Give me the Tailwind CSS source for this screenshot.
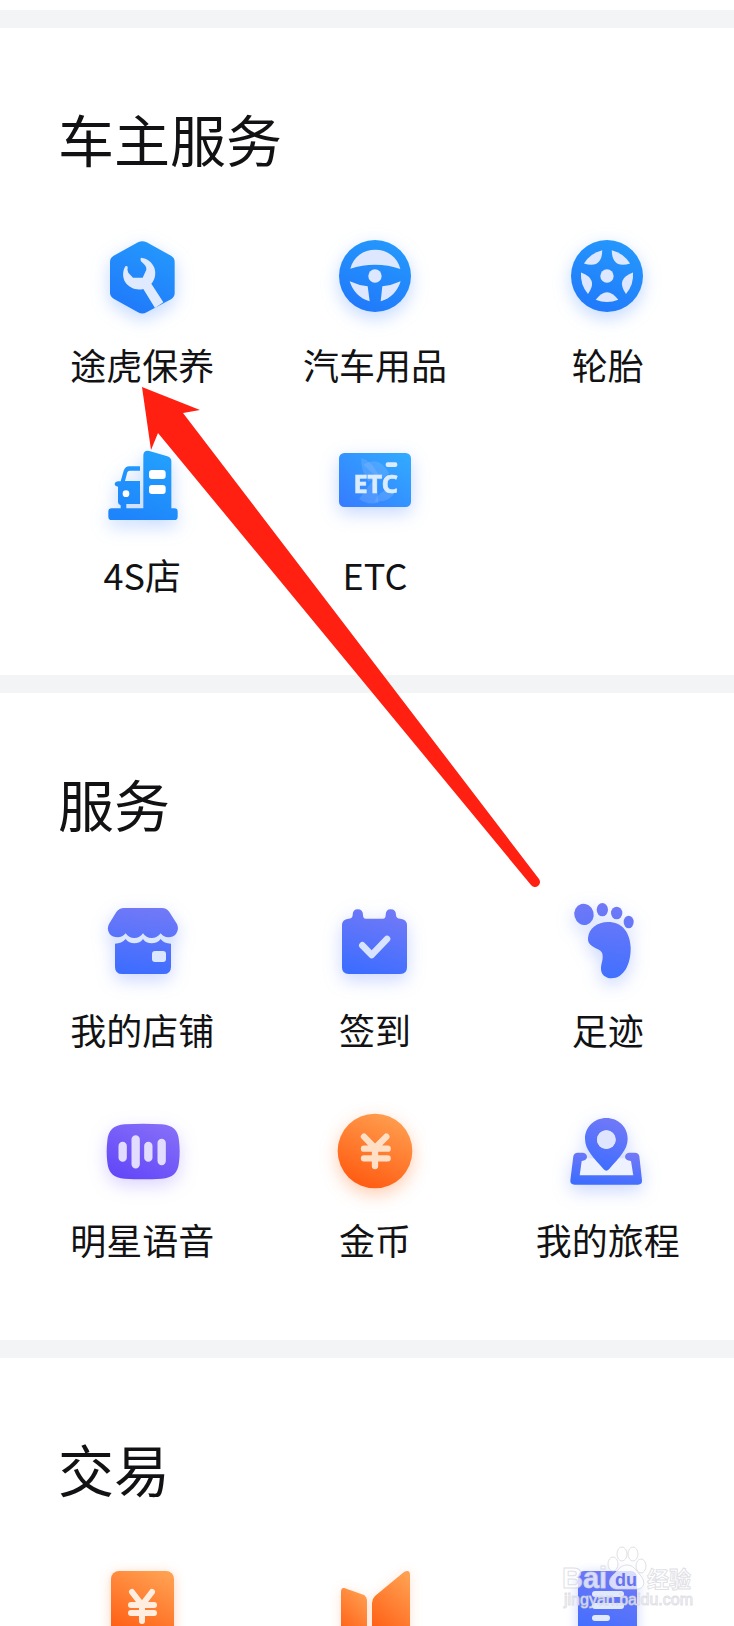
<!DOCTYPE html>
<html lang="zh-CN">
<head>
<meta charset="utf-8">
<meta name="viewport" content="width=device-width, initial-scale=1">
<title>车主服务</title>
<script src="https://cdn.jsdelivr.net/npm/@tailwindcss/browser@4"></script>
</head>
<body class="bg-white font-['Noto_Sans_CJK_SC',sans-serif] text-[#121214]">
<svg class="absolute size-0" aria-hidden="true">
  <defs>
    <linearGradient id="blue" x1="0.7" y1="0" x2="0.3" y2="1"><stop offset="0" stop-color="#2498fd"/><stop offset="1" stop-color="#2079fa"/></linearGradient>
    <linearGradient id="azure" x1="0.7" y1="0" x2="0.3" y2="1"><stop offset="0" stop-color="#22a0fd"/><stop offset="1" stop-color="#1e84fb"/></linearGradient>
    <linearGradient id="card" x1="1" y1="0" x2="0" y2="1"><stop offset="0" stop-color="#31acff"/><stop offset="1" stop-color="#367bff"/></linearGradient>
    <linearGradient id="indigo" x1="0.65" y1="0" x2="0.35" y2="1"><stop offset="0" stop-color="#7179f7"/><stop offset="1" stop-color="#3d6dff"/></linearGradient>
    <linearGradient id="indigoPage" gradientUnits="userSpaceOnUse" x1="270" y1="54" x2="240" y2="252"><stop offset="0" stop-color="#7179f7"/><stop offset="1" stop-color="#3d6dff"/></linearGradient>
    <linearGradient id="footFill" gradientUnits="userSpaceOnUse" x1="330" y1="130" x2="300" y2="355"><stop offset="0" stop-color="#7179f7"/><stop offset="1" stop-color="#4070ff"/></linearGradient>
    <linearGradient id="violet" x1="0.8" y1="0" x2="0.2" y2="1"><stop offset="0" stop-color="#866ef8"/><stop offset="1" stop-color="#6247f8"/></linearGradient>
    <linearGradient id="orange" x1="0.75" y1="0" x2="0.3" y2="1"><stop offset="0" stop-color="#ff9f50"/><stop offset="1" stop-color="#ff5a10"/></linearGradient>
  </defs>
</svg>

<main class="relative flex h-screen flex-col overflow-hidden pt-[10px]">
  <section class="shrink-0 border-t-18 border-[#f3f4f6] pt-[78px] pb-[79px]">
    <h2 class="px-[58px] text-[56px] leading-[64px]">车主服务</h2>
    <div class="mt-[58px] grid grid-cols-3 gap-y-[52px] pr-[10px] pl-[26px] text-[36px] leading-[44px]">
      <a href="#" class="flex flex-col items-center gap-[18px]">
        <svg class="size-24 overflow-visible drop-shadow-[0_6px_9px_rgba(40,120,255,0.28)]" viewBox="102 24 288 288" aria-hidden="true">
          <path fill="url(#blue)" d="M234 67Q247 60 260 67L333 107Q344 113 344 126V220Q344 231 333 238L260 277Q247 284 234 277L161 236Q150 229 150 218V126Q150 113 161 107Z"/>
          <path fill="#dfeaff" d="M197 138C187 152 187 172 196 187C208 205 230 212 250 207L285 264L310 247L274 191C285 179 289 160 283 143C276 126 262 115 243 113C241 117 241 122 246 127C256 135 260 142 259 149L248 173H219L205 158Q201 151 203 141Q202 137 197 138Z"/>
        </svg>
        <span>途虎保养</span>
      </a>
      <a href="#" class="flex flex-col items-center gap-[18px]">
        <svg class="size-24 overflow-visible drop-shadow-[0_6px_9px_rgba(40,120,255,0.28)]" viewBox="111 24 288 288" aria-hidden="true">
          <circle cx="255" cy="168" r="108" fill="url(#blue)"/>
          <g fill="#dde7ff">
            <path d="M181 146C190 110 220 89 256 89C292 89 323 111 331 147C285 130 228 130 181 146Z"/>
            <path d="M179 184Q205 196 233 199L239 244Q194 231 179 184Z"/>
            <path d="M332 184Q306 196 277 199L272 244Q317 231 332 184Z"/>
            <circle cx="255" cy="168" r="20"/>
          </g>
        </svg>
        <span>汽车用品</span>
      </a>
      <a href="#" class="flex flex-col items-center gap-[18px]">
        <svg class="size-24 overflow-visible drop-shadow-[0_6px_9px_rgba(40,120,255,0.28)]" viewBox="60 24 288 288" aria-hidden="true">
          <circle cx="201" cy="168" r="108" fill="url(#blue)"/>
          <g fill="#dde7ff">
            <circle cx="201" cy="168" r="20"/>
            <path id="slot" d="M167 239Q201 194 235 239Q201 253 167 239Z"/>
            <use href="#slot" transform="rotate(72 201 168)"/>
            <use href="#slot" transform="rotate(144 201 168)"/>
            <use href="#slot" transform="rotate(216 201 168)"/>
            <use href="#slot" transform="rotate(288 201 168)"/>
          </g>
        </svg>
        <span>轮胎</span>
      </a>
      <a href="#" class="flex flex-col items-center gap-[18px]">
        <svg class="size-24 overflow-visible drop-shadow-[0_6px_9px_rgba(40,120,255,0.28)]" viewBox="102 174 288 288" aria-hidden="true">
          <path fill="#fff" d="M262 265H322V347H262ZM186 329H210V353H186Z"/>
          <path fill="url(#azure)" fill-rule="evenodd" d="M250 385V227Q250 210 268 213L322 229Q334 233 334 244V385H343Q353 385 353 395V410Q353 420 343 420H155Q145 420 145 410V395Q145 385 155 385H182V376Q174 373 174 366V320Q164 318 164 311Q165 305 174 304H182L191 272Q196 259 208 259H240V272H209Q204 272 202 277L195 303H240V372H199V385ZM276 270Q267 270 267 279V288Q267 297 276 297H308Q317 297 317 288V279Q317 270 308 270ZM276 315Q267 315 267 324V333Q267 342 276 342H308Q317 342 317 333V324Q317 315 308 315ZM198 331A10 10 0 1 0 198 351A10 10 0 1 0 198 331Z"/>
        </svg>
        <span>4S店</span>
      </a>
      <a href="#" class="flex flex-col items-center gap-[18px]">
        <svg class="size-24 overflow-visible drop-shadow-[0_6px_9px_rgba(50,110,255,0.28)]" viewBox="81 24 288 288" aria-hidden="true">
          <rect x="117" y="69" width="216" height="162" rx="16" fill="url(#card)"/>
          <g fill="#9cc4ff" fill-opacity="0.25">
            <path d="M184 84Q216 92 238 139L205 155Q181 120 184 84Z"/>
            <path d="M190 104Q240 75 267 130L240 150Z"/>
            <path d="M177 207Q198 180 216 154Q235 170 235 218Q203 226 177 207Z"/>
            <path d="M224 215Q241 170 286 184Q270 219 224 215Z"/>
          </g>
          <rect x="257" y="97" width="35" height="14" rx="6" fill="#dcecff"/>
          <text x="227" y="189" text-anchor="middle" font-family="Noto Sans, sans-serif" font-weight="700" font-size="76" fill="#dcecff" stroke="#dcecff" stroke-width="2">ETC</text>
        </svg>
        <span>ETC</span>
      </a>
    </div>
  </section>

  <section class="shrink-0 border-t-18 border-[#f3f4f6] pt-[78px] pb-[79px]">
    <h2 class="px-[58px] text-[56px] leading-[64px]">服务</h2>
    <div class="mt-[58px] grid grid-cols-3 gap-y-[52px] pr-[10px] pl-[26px] text-[36px] leading-[44px]">
      <a href="#" class="flex flex-col items-center gap-[18px]">
        <svg class="size-24 overflow-visible drop-shadow-[0_6px_9px_rgba(70,110,255,0.28)]" viewBox="102 9 288 288" aria-hidden="true">
          <rect x="165" y="125" width="168" height="60" fill="#dbe7ff"/>
          <g fill="url(#indigoPage)">
            <path d="M192 54H306Q320 54 328 66L351 102Q358 118 348 132Q339 142 325 142Q311 142 302 130Q292 144 275 144Q258 144 249 130Q240 144 223 144Q206 144 197 130Q187 142 173 142Q158 142 149 132Q139 118 147 102L169 66Q178 54 192 54Z"/>
            <path d="M165 161Q185 161 197 147Q207 160 223 160Q240 160 249 147Q258 160 275 160Q292 160 302 147Q312 161 333 161V230Q333 252 311 252H187Q165 252 165 230Z"/>
          </g>
          <rect x="276" y="183" width="42" height="33" rx="9" fill="#dbe7ff"/>
        </svg>
        <span>我的店铺</span>
      </a>
      <a href="#" class="flex flex-col items-center gap-[18px]">
        <svg class="size-24 overflow-visible drop-shadow-[0_6px_9px_rgba(70,110,255,0.28)]" viewBox="801 9 288 288" aria-hidden="true">
          <path fill="url(#indigo)" d="M865 86Q878 86 878 75Q878 58 893 58Q909 58 909 75Q909 86 917 86H969Q977 86 977 75Q977 58 992 58Q1008 58 1008 75Q1008 86 1021 86Q1041 88 1041 106V232Q1041 252 1021 252H866Q846 252 846 232V106Q846 88 865 86Z"/>
          <path d="M907 166L935 195L981 147" fill="none" stroke="#d8e3ff" stroke-width="20" stroke-linecap="round" stroke-linejoin="round"/>
        </svg>
        <span>签到</span>
      </a>
      <a href="#" class="flex flex-col items-center gap-[18px]">
        <svg class="size-24 overflow-visible drop-shadow-[0_6px_9px_rgba(70,110,255,0.28)]" viewBox="180 99 288 288" aria-hidden="true">
          <g fill="url(#footFill)">
            <ellipse cx="252" cy="163" rx="29" ry="32" transform="rotate(-15 252 163)"/>
            <ellipse cx="307" cy="149" rx="17" ry="20"/>
            <ellipse cx="350" cy="159" rx="17" ry="19"/>
            <ellipse cx="386" cy="186" rx="15" ry="19"/>
            <path d="M264 235C266 205 292 186 324 186C366 186 390 216 392 262C393 315 370 355 335 355C314 354 303 342 303 326C303 310 309 302 308 287C307 269 290 268 277 259C267 252 263 245 264 235Z"/>
          </g>
        </svg>
        <span>足迹</span>
      </a>
      <a href="#" class="flex flex-col items-center gap-[18px]">
        <svg class="size-24 overflow-visible drop-shadow-[0_6px_9px_rgba(110,80,255,0.25)]" viewBox="102 39 288 288" aria-hidden="true">
          <path fill="url(#violet)" d="M194 103Q249 99 305 103C338 105 355 121 357 152Q361 184 357 217C354 249 338 264 305 266Q249 270 194 266C161 264 145 249 142 217Q138 184 142 152C145 121 161 105 194 103Z"/>
          <g stroke="#e2dcff" stroke-width="25" stroke-linecap="round">
            <path d="M188 168V203M227 148V223M265 168V203M305 159V213"/>
          </g>
        </svg>
        <span>明星语音</span>
      </a>
      <a href="#" class="flex flex-col items-center gap-[18px]">
        <svg class="size-24 overflow-visible drop-shadow-[0_6px_9px_rgba(255,110,30,0.35)]" viewBox="111 39 288 288" aria-hidden="true">
          <circle cx="255" cy="183" r="112" fill="url(#orange)"/>
          <path d="M222 140L255 174L289 140M222 176H293M222 205H293M255 174V228" fill="none" stroke="#ffe0c6" stroke-width="19" stroke-linecap="round" stroke-linejoin="round"/>
        </svg>
        <span>金币</span>
      </a>
      <a href="#" class="flex flex-col items-center gap-[18px]">
        <svg class="size-24 overflow-visible drop-shadow-[0_6px_9px_rgba(70,110,255,0.28)]" viewBox="120 39 288 288" aria-hidden="true">
          <path fill="#eef2ff" d="M185 205H333L338 260H180Z"/>
          <path fill="url(#indigo)" d="M173 188H189Q201 190 201 201Q200 212 185 213L179 256H340L333 213Q316 211 315 201Q315 190 327 188H345Q356 188 358 199L366 271Q367 284 354 284H164Q150 284 151 271L160 199Q162 188 173 188Z"/>
          <path fill="url(#indigo)" fill-rule="evenodd" d="M259 84C295 84 323 111 323 146C323 180 297 202 267 238Q259 246 251 238C221 202 195 180 195 146C195 111 223 84 259 84ZM259 121A28 28 0 1 0 259 177A28 28 0 1 0 259 121Z"/>
          <circle cx="259" cy="149" r="28" fill="#dfe5ff"/>
        </svg>
        <span>我的旅程</span>
      </a>
    </div>
  </section>

  <section class="shrink-0 border-t-18 border-[#f3f4f6] pt-[78px]">
    <h2 class="px-[58px] text-[56px] leading-[64px]">交易</h2>
    <div class="mt-[58px] grid grid-cols-3 pr-[10px] pl-[26px]">
      <a href="#" class="flex flex-col items-center">
        <svg class="size-24 overflow-visible drop-shadow-[0_2px_6px_rgba(255,110,30,0.3)]" viewBox="94 1558 96 96" aria-hidden="true">
          <rect x="111" y="1571" width="63" height="72" rx="8" fill="url(#orange)"/>
          <path d="M132 1592L142 1605L152 1592M131 1605H154M131 1613H154M142 1605V1621" fill="none" stroke="#ffeee0" stroke-width="6" stroke-linecap="round" stroke-linejoin="round"/>
        </svg>
      </a>
      <a href="#" class="flex flex-col items-center">
        <svg class="size-24 overflow-visible drop-shadow-[0_2px_6px_rgba(255,110,30,0.2)]" viewBox="327 1558 96 96" aria-hidden="true">
          <path fill="url(#orange)" d="M341 1592Q341 1586 347 1589L364 1595Q367 1597 367 1601V1645L341 1636Z"/>
          <path fill="url(#orange)" d="M372 1603Q372 1599 375 1596L404 1572Q410 1569 410 1575V1634L372 1645Z"/>
        </svg>
      </a>
      <a href="#" class="flex flex-col items-center">
        <svg class="size-24 overflow-visible drop-shadow-[0_2px_6px_rgba(70,110,255,0.3)]" viewBox="560 1558 96 96" aria-hidden="true">
          <rect x="578" y="1571" width="59" height="72" rx="6" fill="url(#indigo)"/>
          <g fill="#e1e9ff">
            <rect x="592" y="1591" width="32" height="6" rx="3"/>
            <rect x="592" y="1603" width="32" height="6" rx="3"/>
            <rect x="592" y="1615" width="18" height="6" rx="3"/>
          </g>
        </svg>
      </a>
    </div>
  </section>

  <svg class="pointer-events-none absolute top-[380px] left-[130px] h-[520px] w-[420px]" viewBox="130 380 420 520" aria-hidden="true">
    <path fill="#ff2012" d="M142 387L200 410L183 413L539 879A5 5 0 0 1 531 885L158 433L151 450Z"/>
  </svg>

  <svg class="pointer-events-none absolute right-[38px] bottom-[10px] h-[72px] w-[136px]" viewBox="560 1544 136 72" aria-label="Baidu 经验">
    <g fill="#fff" fill-opacity="0.75" stroke="#d2d2da" stroke-opacity="0.7" stroke-width="1">
      <ellipse cx="613" cy="1564" rx="5" ry="7"/>
      <ellipse cx="622" cy="1554" rx="5" ry="7"/>
      <ellipse cx="633" cy="1554" rx="5" ry="7"/>
      <ellipse cx="641" cy="1566" rx="5" ry="7"/>
      <path d="M627 1565C620 1565 618 1571 613 1575C606 1582 610 1590 619 1589H635C645 1590 646 1581 640 1575C636 1570 633 1565 627 1565Z"/>
      <g font-weight="700">
        <text x="562" y="1588" font-family="Liberation Sans, sans-serif" font-size="29">Bai</text>
        <text x="647" y="1587" font-family="Noto Sans CJK SC, sans-serif" font-size="22">经验</text>
      </g>
      <text x="564" y="1605" font-family="Liberation Sans, sans-serif" font-size="16">jingyan.baidu.com</text>
    </g>
    <text x="615" y="1586" font-family="Liberation Sans, sans-serif" font-size="18" font-weight="700" fill="#6673ee">du</text>
  </svg>
</main>
</body>
</html>
